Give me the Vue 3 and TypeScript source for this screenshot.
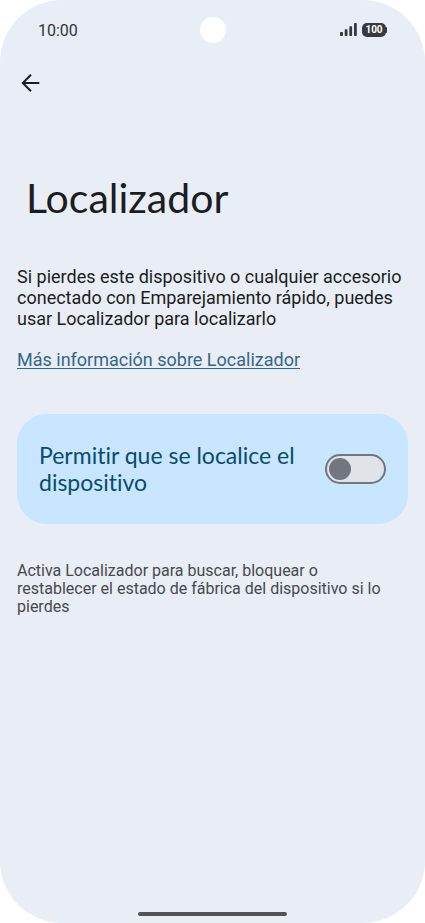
<script setup lang="ts">
import { ref } from 'vue'

const allowed = ref<boolean>(false)
const batteryLevel = 100
const time = '10:00'
</script>

<template>
  <div class="screen">
    <header class="status">
      <time class="clock">{{ time }}</time>
      <span class="camera" aria-hidden="true"></span>
      <div class="indicators">
        <svg class="signal" viewBox="0 0 17 14" aria-hidden="true">
          <rect x="0" y="9" width="3" height="4" rx="0.8" />
          <rect x="4.7" y="6.3" width="2.8" height="6.7" rx="0.8" />
          <rect x="9.3" y="3.2" width="2.8" height="9.8" rx="0.8" />
          <rect x="14" y="0" width="2.8" height="13" rx="0.8" />
        </svg>
        <span class="battery">{{ batteryLevel }}</span>
      </div>
    </header>

    <nav class="toolbar">
      <button class="back" type="button" aria-label="Atrás">
        <svg viewBox="0 0 24 24" aria-hidden="true">
          <path d="M21.3 12H4.8M13 3.8L4.8 12l8.2 8.2" />
        </svg>
      </button>
    </nav>

    <main class="content">
      <h1 class="title">Localizador</h1>
      <p class="intro">
        Si pierdes este dispositivo o cualquier accesorio conectado con Emparejamiento rápido, puedes usar Localizador para localizarlo
      </p>
      <a class="more" href="#">Más información sobre Localizador</a>

      <label class="card" for="allow">
        <span class="card-label">Permitir que se localice el dispositivo</span>
        <input id="allow" v-model="allowed" class="switch" type="checkbox" role="switch" />
      </label>

      <p class="note">
        Activa Localizador para buscar, bloquear o restablecer el estado de fábrica del dispositivo si lo pierdes
      </p>
    </main>

    <div class="handle" aria-hidden="true"></div>
  </div>
</template>

<style>
body {
  background: #fff;
}
</style>

<style scoped>
.screen {
  box-sizing: border-box;
  display: flex;
  flex-direction: column;
  min-height: 100vh;
  border-radius: 62px;
  background: #e9edf5;
  color: #1b1d21;
  font-family: Roboto, sans-serif;
}

.status {
  display: grid;
  grid-template-columns: 1fr auto 1fr;
  align-items: center;
  height: 60px;
  padding: 0 38px;
}

.clock {
  color: #333538;
  font-size: 16px;
}

.camera {
  width: 26px;
  height: 26px;
  border-radius: 50%;
  background: #fff;
}

.indicators {
  display: flex;
  align-items: center;
  justify-content: flex-end;
  gap: 5px;
}

.signal {
  width: 17px;
  height: 14px;
  fill: #37393c;
}

.battery {
  position: relative;
  width: 24px;
  height: 14px;
  margin-right: 1px;
  border-radius: 5px;
  background: #37393c;
  color: #fff;
  font-size: 10px;
  font-weight: 700;
  line-height: 14px;
  text-align: center;
}

.battery::after {
  content: '';
  position: absolute;
  top: 4px;
  right: -1px;
  width: 1px;
  height: 6px;
  border-radius: 0 1px 1px 0;
  background: #37393c;
}

.toolbar {
  display: flex;
  height: 46px;
  align-items: center;
  padding: 0 18px;
}

.back {
  display: flex;
  padding: 0;
  border: 0;
  background: none;
  color: #1b1d21;
  cursor: pointer;
}

.back svg {
  width: 24px;
  height: 24px;
  fill: none;
  stroke: currentColor;
  stroke-width: 2;
}

.content {
  flex: 1;
  padding: 68px 17px 0;
}

.title {
  margin: 0 9px 44px;
  font-family: Lato, sans-serif;
  font-size: 41px;
  font-weight: 400;
  line-height: 48px;
}

.intro {
  margin: 0 0 20px;
  font-size: 18px;
  line-height: 21px;
}

.more {
  display: block;
  width: fit-content;
  color: #326887;
  font-size: 18px;
  line-height: 21px;
  text-decoration-thickness: 1px;
  text-underline-offset: 2px;
}

.card {
  display: flex;
  align-items: center;
  justify-content: space-between;
  gap: 20px;
  margin: 44px 0 38px;
  padding: 28px 22px;
  border-radius: 30px;
  background: #c8e6ff;
  cursor: pointer;
}

.card-label {
  color: #084c6e;
  font-family: Lato, sans-serif;
  font-size: 23px;
  font-variant-ligatures: none;
  line-height: 27px;
}

.switch {
  appearance: none;
  box-sizing: border-box;
  display: flex;
  flex: none;
  align-items: center;
  width: 61px;
  height: 30px;
  margin: 0;
  padding: 0 2px;
  border: 2px solid #72777f;
  border-radius: 15px;
  background: #e0e3e8;
  cursor: pointer;
}

.switch::before {
  content: '';
  width: 22px;
  height: 22px;
  border-radius: 50%;
  background: #72777f;
}

.switch:checked {
  justify-content: flex-end;
  border-color: #084c6e;
  background: #084c6e;
}

.switch:checked::before {
  background: #fff;
}

.note {
  margin: 0;
  padding-right: 20px;
  color: #46494e;
  font-size: 16px;
  line-height: 18px;
}

.handle {
  width: 35%;
  height: 4px;
  margin: 0 auto 7px;
  border-radius: 2px;
  background: #535355;
}
</style>
